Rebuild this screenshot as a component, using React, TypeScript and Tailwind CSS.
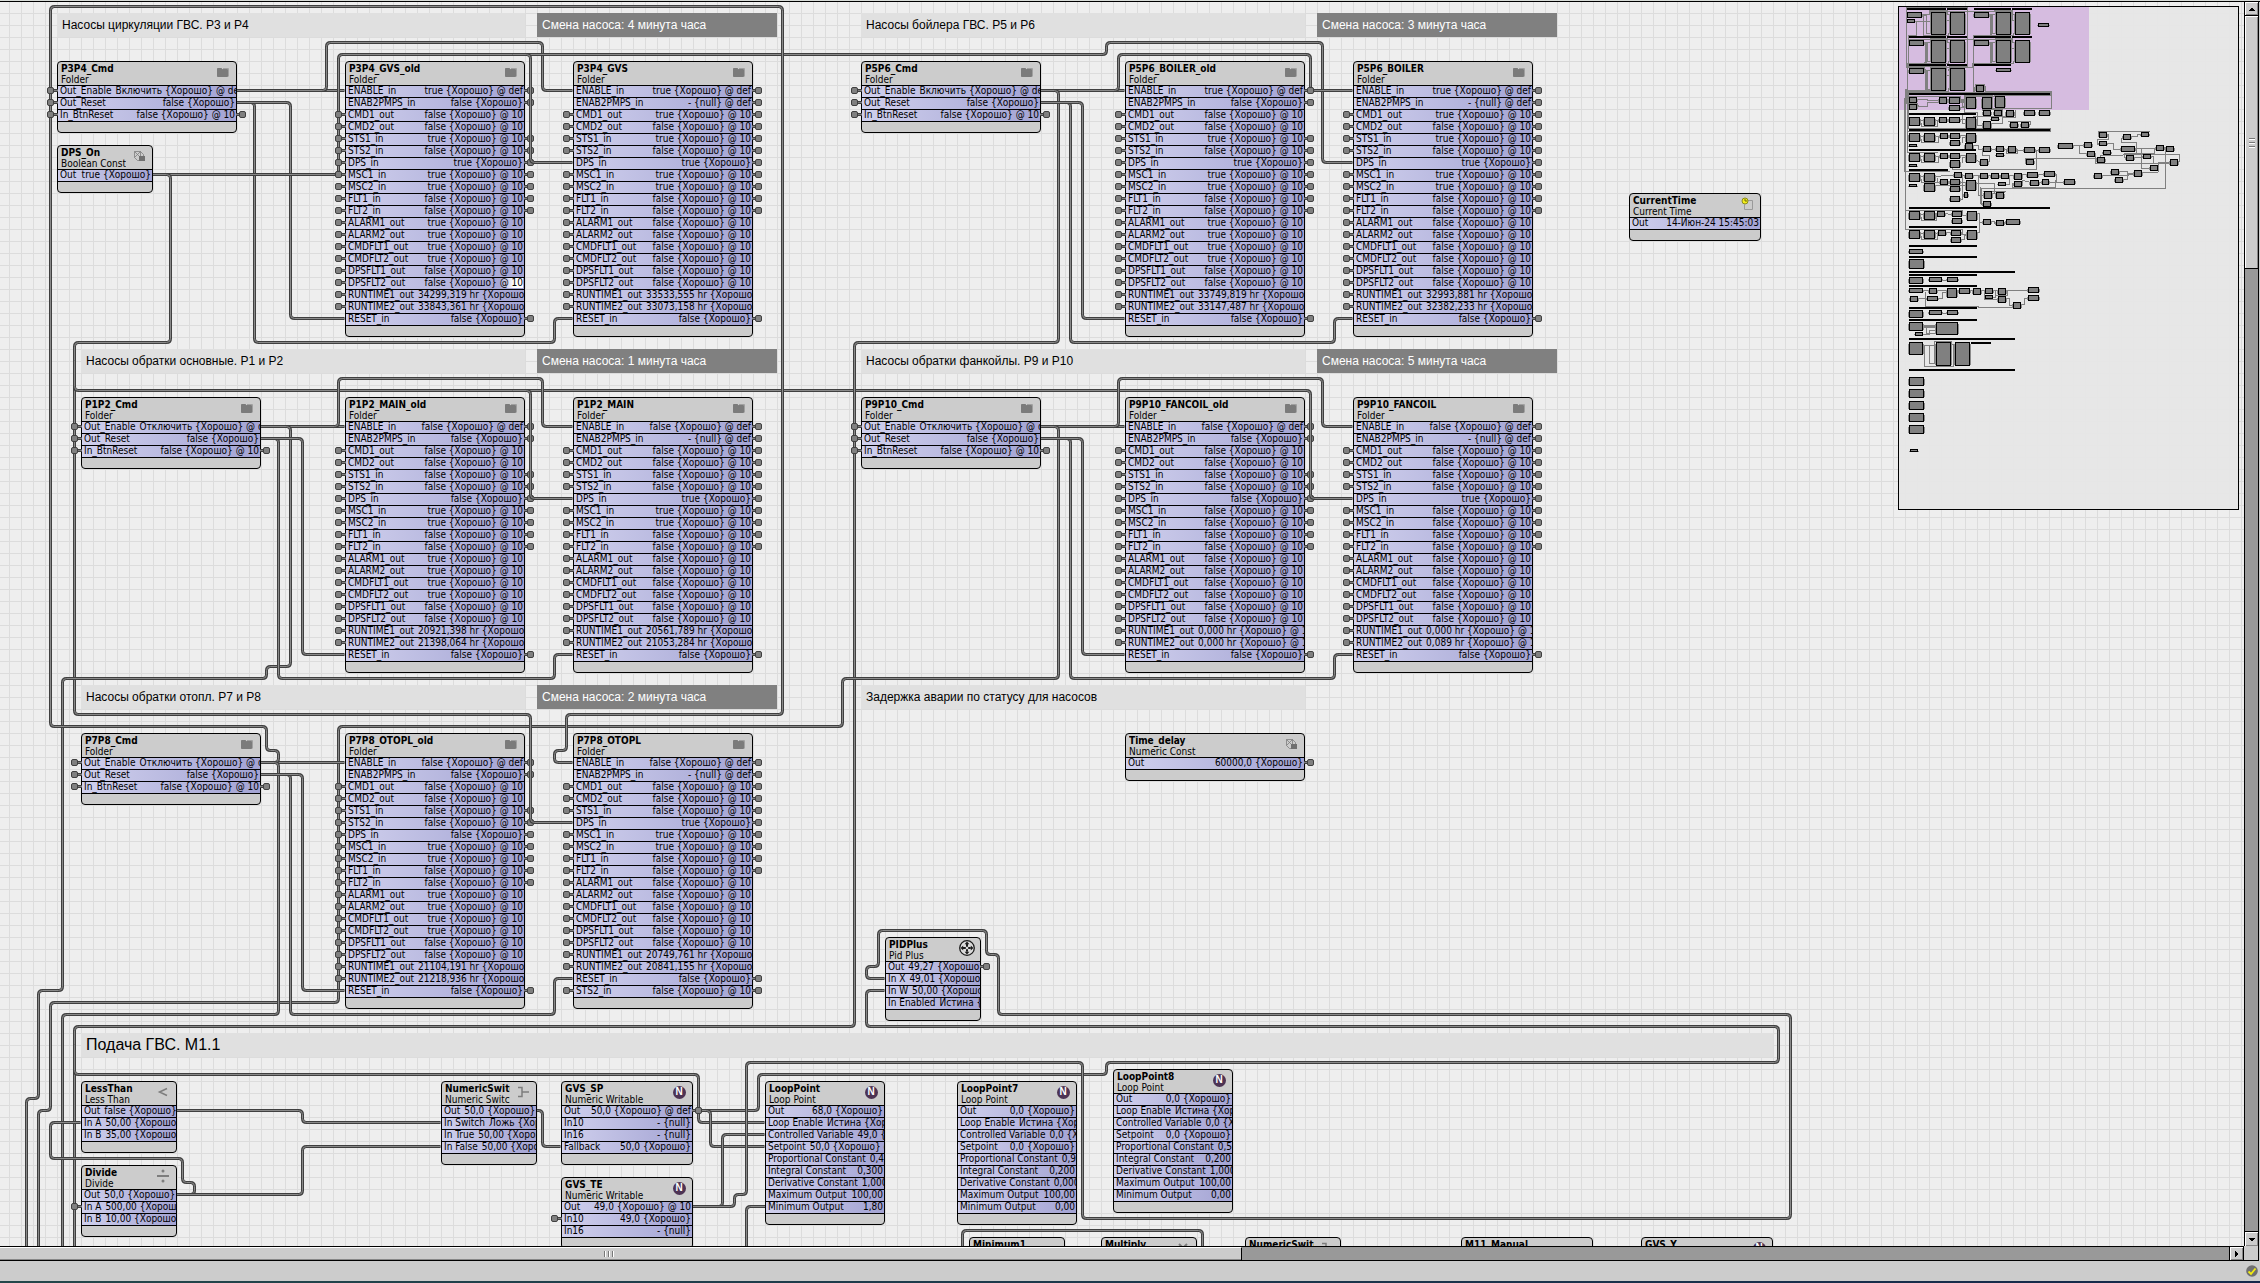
import React from "react";

const CELL = 12;
const ORIGIN_X = 9;
const ORIGIN_Y = -1;

type IconName =
  | "folder"
  | "const"
  | "clock"
  | "less"
  | "divide"
  | "switch"
  | "numeric"
  | "pid"
  | "minimum"
  | "multiply"
  | "manual";

/** label, value, flags: "l" = left pin, "r" = right pin, "h" = highlighted value */
type Row = [string, string, string?];

interface NodeData {
  x: number;
  y: number;
  w: number;
  name: string;
  type: string;
  icon: IconName;
  rows: Row[];
}

interface NoteData {
  x: number;
  y: number;
  w: number;
  text: string;
  tone?: "light" | "dark" | "large";
}

const T10 = "true {Хорошо} @ 10";
const F10 = "false {Хорошо} @ 10";
const T = "true {Хорошо}";
const F = "false {Хорошо}";
const TDEF = "true {Хорошо} @ def";
const FDEF = "false {Хорошо} @ def";
const NDEF = "- {null} @ def";
const NULL = "- {null}";

const PUMP_LABELS = [
  "ENABLE_in",
  "ENAB2PMPS_in",
  "CMD1_out",
  "CMD2_out",
  "STS1_in",
  "STS2_in",
  "DPS_in",
  "MSC1_in",
  "MSC2_in",
  "FLT1_in",
  "FLT2_in",
  "ALARM1_out",
  "ALARM2_out",
  "CMDFLT1_out",
  "CMDFLT2_out",
  "DPSFLT1_out",
  "DPSFLT2_out",
  "RUNTIME1_out",
  "RUNTIME2_out",
  "RESET_in",
];

const OLD_PINS = ["r", "r", "l", "l", "lr", "lr", "lr", "lr", "lr", "lr", "lr", "l", "l", "l", "l", "l", "l", "l", "l", "r"];
const NEW_PINS = ["r", "r", "lr", "lr", "lr", "lr", "r", "lr", "lr", "lr", "lr", "l", "l", "l", "l", "l", "l", "l", "l", "r"];

const pumpRows = (values: string[], pins: string[]): Row[] =>
  PUMP_LABELS.map((label, i): Row => [label, values[i], pins[i]]);

const cmd = (x: number, y: number, name: string, enable: string): NodeData => ({
  x,
  y,
  w: 15,
  name,
  type: "Folder",
  icon: "folder",
  rows: [
    ["Out_Enable", enable, "l"],
    ["Out_Reset", F, "l"],
    ["In_BtnReset", F10, "lr"],
  ],
});

const pump = (x: number, y: number, name: string, rows: Row[]): NodeData => ({
  x,
  y,
  w: 15,
  name,
  type: "Folder",
  icon: "folder",
  rows,
});

const loopRows = (
  out: string,
  variable: string,
  setpoint: string,
  p: string,
  i: string,
  d: string,
  max: string,
  min: string,
): Row[] => [
  ["Out", out],
  ["Loop Enable", "Истина {Хорошо}"],
  ["Controlled Variable", variable],
  ["Setpoint", setpoint],
  ["Proportional Constant", p],
  ["Integral Constant", i],
  ["Derivative Constant", d],
  ["Maximum Output", max],
  ["Minimum Output", min],
];

const gvsOld = pumpRows(
  [TDEF, F, F10, F10, T10, F10, T, T10, T10, F10, F10, T10, T10, T10, T10, F10, F10, "34299,319 hr {Хорошо}", "33843,361 hr {Хорошо}", F],
  OLD_PINS,
);
gvsOld[16] = ["DPSFLT2_out", F10, "lh"];

const NODES: NodeData[] = [
  cmd(4, 5, "P3P4_Cmd", "Включить {Хорошо} @ def"),
  { x: 4, y: 12, w: 8, name: "DPS_On", type: "Boolean Const", icon: "const", rows: [["Out", T]] },
  pump(28, 5, "P3P4_GVS_old", gvsOld),
  pump(
    47,
    5,
    "P3P4_GVS",
    pumpRows(
      [TDEF, NDEF, T10, F10, T10, F10, T, T10, T10, F10, F10, F10, F10, F10, F10, F10, F10, "33533,555 hr {Хорошо}", "33073,158 hr {Хорошо}", F],
      NEW_PINS,
    ),
  ),
  cmd(71, 5, "P5P6_Cmd", "Включить {Хорошо} @ def"),
  pump(
    93,
    5,
    "P5P6_BOILER_old",
    pumpRows(
      [TDEF, F, F10, F10, T10, F10, T, T10, T10, F10, F10, T10, T10, T10, T10, F10, F10, "33749,819 hr {Хорошо}", "33147,487 hr {Хорошо}", F],
      OLD_PINS,
    ),
  ),
  pump(
    112,
    5,
    "P5P6_BOILER",
    pumpRows(
      [TDEF, NDEF, T10, F10, T10, F10, T, T10, T10, F10, F10, F10, F10, F10, F10, F10, F10, "32993,881 hr {Хорошо}", "32382,233 hr {Хорошо}", F],
      NEW_PINS,
    ),
  ),
  {
    x: 135,
    y: 16,
    w: 11,
    name: "CurrentTime",
    type: "Current Time",
    icon: "clock",
    rows: [["Out", "14-Июн-24 15:45:03"]],
  },
  cmd(6, 33, "P1P2_Cmd", "Отключить {Хорошо} @ def"),
  pump(
    28,
    33,
    "P1P2_MAIN_old",
    pumpRows(
      [FDEF, F, F10, F10, F10, F10, F, T10, T10, F10, F10, T10, T10, T10, T10, F10, F10, "20921,398 hr {Хорошо}", "21398,064 hr {Хорошо}", F],
      OLD_PINS,
    ),
  ),
  pump(
    47,
    33,
    "P1P2_MAIN",
    pumpRows(
      [FDEF, NDEF, F10, F10, F10, F10, T, T10, T10, F10, F10, F10, F10, F10, F10, F10, F10, "20561,789 hr {Хорошо}", "21053,284 hr {Хорошо}", F],
      NEW_PINS,
    ),
  ),
  cmd(71, 33, "P9P10_Cmd", "Отключить {Хорошо} @ def"),
  pump(
    93,
    33,
    "P9P10_FANCOIL_old",
    pumpRows(
      [FDEF, F, F10, F10, F10, F10, F, F10, F10, F10, F10, F10, F10, F10, F10, F10, F10, "0,000 hr {Хорошо} @ 10", "0,000 hr {Хорошо} @ 10", F],
      OLD_PINS,
    ),
  ),
  pump(
    112,
    33,
    "P9P10_FANCOIL",
    pumpRows(
      [FDEF, NDEF, F10, F10, F10, F10, T, F10, F10, F10, F10, F10, F10, F10, F10, F10, F10, "0,000 hr {Хорошо} @ 10", "0,089 hr {Хорошо} @ 10", F],
      NEW_PINS,
    ),
  ),
  cmd(6, 61, "P7P8_Cmd", "Отключить {Хорошо} @ def"),
  pump(
    28,
    61,
    "P7P8_OTOPL_old",
    pumpRows(
      [FDEF, F, F10, F10, F10, F10, F, T10, T10, F10, F10, T10, T10, T10, T10, F10, F10, "21104,191 hr {Хорошо}", "21218,936 hr {Хорошо}", F],
      OLD_PINS,
    ),
  ),
  pump(47, 61, "P7P8_OTOPL", [
    ["ENABLE_in", FDEF, "r"],
    ["ENAB2PMPS_in", NDEF, "r"],
    ["CMD1_out", F10, "lr"],
    ["CMD2_out", F10, "lr"],
    ["STS1_in", F10, "lr"],
    ["DPS_in", T, "r"],
    ["MSC1_in", T10, "lr"],
    ["MSC2_in", T10, "lr"],
    ["FLT1_in", F10, "lr"],
    ["FLT2_in", F10, "lr"],
    ["ALARM1_out", F10, "l"],
    ["ALARM2_out", F10, "l"],
    ["CMDFLT1_out", F10, "l"],
    ["CMDFLT2_out", F10, "l"],
    ["DPSFLT1_out", F10, "l"],
    ["DPSFLT2_out", F10, "l"],
    ["RUNTIME1_out", "20749,761 hr {Хорошо}", "l"],
    ["RUNTIME2_out", "20841,155 hr {Хорошо}", "l"],
    ["RESET_in", F, "r"],
    ["STS2_in", F10, "lr"],
  ]),
  {
    x: 93,
    y: 61,
    w: 15,
    name: "Time_delay",
    type: "Numeric Const",
    icon: "const",
    rows: [["Out", "60000,0 {Хорошо}", "r"]],
  },
  {
    x: 73,
    y: 78,
    w: 8,
    name: "PIDPlus",
    type: "Pid Plus",
    icon: "pid",
    rows: [
      ["Out", "49,27 {Хорошо}", "r"],
      ["In X", "49,01 {Хорошо}"],
      ["In W", "50,00 {Хорошо}"],
      ["In Enabled", "Истина {Хорошо}"],
    ],
  },
  {
    x: 6,
    y: 90,
    w: 8,
    name: "LessThan",
    type: "Less Than",
    icon: "less",
    rows: [
      ["Out", F],
      ["In A", "50,00 {Хорошо}"],
      ["In B", "35,00 {Хорошо}"],
    ],
  },
  {
    x: 6,
    y: 97,
    w: 8,
    name: "Divide",
    type: "Divide",
    icon: "divide",
    rows: [
      ["Out", "50,0 {Хорошо}"],
      ["In A", "500,00 {Хорошо}", "l"],
      ["In B", "10,00 {Хорошо}"],
    ],
  },
  {
    x: 36,
    y: 90,
    w: 8,
    name: "NumericSwitch",
    type: "Numeric Switch",
    icon: "switch",
    rows: [
      ["Out", "50,0 {Хорошо}"],
      ["In Switch", "Ложь {Хорошо}"],
      ["In True", "50,00 {Хорошо}"],
      ["In False", "50,00 {Хорошо}"],
    ],
  },
  {
    x: 46,
    y: 90,
    w: 11,
    name: "GVS_SP",
    type: "Numeric Writable",
    icon: "numeric",
    rows: [
      ["Out", "50,0 {Хорошо} @ def", "r"],
      ["In10", NULL],
      ["In16", NULL],
      ["Fallback", "50,0 {Хорошо}"],
    ],
  },
  {
    x: 46,
    y: 98,
    w: 11,
    name: "GVS_TE",
    type: "Numeric Writable",
    icon: "numeric",
    rows: [
      ["Out", "49,0 {Хорошо} @ 10"],
      ["In10", "49,0 {Хорошо}", "l"],
      ["In16", NULL],
    ],
  },
  {
    x: 63,
    y: 90,
    w: 10,
    name: "LoopPoint",
    type: "Loop Point",
    icon: "numeric",
    rows: loopRows("68,0 {Хорошо}", "49,0 {Хорошо}", "50,0 {Хорошо} @ def", "0,400", "0,300", "1,000", "100,00", "1,80"),
  },
  {
    x: 79,
    y: 90,
    w: 10,
    name: "LoopPoint7",
    type: "Loop Point",
    icon: "numeric",
    rows: loopRows("0,0 {Хорошо}", "0,0 {Хорошо}", "0,0 {Хорошо}", "0,900", "0,200", "0,000", "100,00", "0,00"),
  },
  {
    x: 92,
    y: 89,
    w: 10,
    name: "LoopPoint8",
    type: "Loop Point",
    icon: "numeric",
    rows: loopRows("0,0 {Хорошо}", "0,0 {Хорошо}", "0,0 {Хорошо}", "0,500", "0,200", "1,000", "100,00", "0,00"),
  },
  { x: 80, y: 103, w: 8, name: "Minimum1", type: "Minimum", icon: "minimum", rows: [["Out", "68,0 {Хорошо}"]] },
  { x: 91, y: 103, w: 8, name: "Multiply", type: "Multiply", icon: "multiply", rows: [["Out", "68,0 {Хорошо}"]] },
  { x: 103, y: 103, w: 8, name: "NumericSwitch1", type: "Numeric Switch", icon: "switch", rows: [["Out", "68,0 {Хорошо}"]] },
  { x: 121, y: 103, w: 11, name: "M11_Manual", type: "Numeric Writable", icon: "manual", rows: [["Out", "68,0 {Хорошо}"]] },
  { x: 136, y: 103, w: 11, name: "GVS_Y", type: "Numeric Writable", icon: "numeric", rows: [["Out", "68,0 {Хорошо}"]] },
];

const NOTES: NoteData[] = [
  { x: 4, y: 1, w: 39, text: "Насосы циркуляции ГВС. P3 и P4" },
  { x: 44, y: 1, w: 20, text: "Смена насоса: 4 минута часа", tone: "dark" },
  { x: 71, y: 1, w: 37, text: "Насосы бойлера ГВС. P5 и P6" },
  { x: 109, y: 1, w: 20, text: "Смена насоса: 3 минута часа", tone: "dark" },
  { x: 6, y: 29, w: 37, text: "Насосы обратки основные. P1 и P2" },
  { x: 44, y: 29, w: 20, text: "Смена насоса: 1 минута часа", tone: "dark" },
  { x: 71, y: 29, w: 37, text: "Насосы обратки фанкойлы. P9 и P10" },
  { x: 109, y: 29, w: 20, text: "Смена насоса: 5 минута часа", tone: "dark" },
  { x: 6, y: 57, w: 37, text: "Насосы обратки отопл. P7 и P8" },
  { x: 44, y: 57, w: 20, text: "Смена насоса: 2 минута часа", tone: "dark" },
  { x: 71, y: 57, w: 37, text: "Задержка аварии по статусу для насосов" },
  { x: 6, y: 86, w: 141, text: "Подача ГВС. M1.1", tone: "large" },
];

/** Each wire is a list of x, y cell pairs, joined with rounded corners. */
const WIRES: number[][] = [
  [19, 7, 28, 7],
  [19, 7, 26, 7, 26, 3, 44, 3, 44, 7, 47, 7],
  [19, 8, 20, 8, 20, 28, 45, 28, 45, 26, 47, 26],
  [19, 8, 23, 8, 23, 26, 28, 26],
  [12, 14, 27, 14, 27, 4, 91, 4, 91, 3, 109, 3, 109, 13, 112, 13],
  [12, 14, 13, 14, 13, 28, 5, 28, 5, 59, 43, 59],
  [5, 30, 5, 32, 108, 32],
  [21, 35, 28, 35],
  [21, 35, 27, 35, 27, 31, 44, 31, 44, 35, 47, 35],
  [21, 35, 23, 35, 23, 55, 21, 55, 21, 56, 4, 56, 4, 82, 2, 82, 2, 91, 1, 91, 1, 106],
  [21, 36, 22, 36, 22, 56, 45, 56, 45, 54, 47, 54],
  [21, 36, 24, 36, 24, 54, 28, 54],
  [86, 7, 93, 7],
  [86, 7, 92, 7, 92, 4, 108, 4, 108, 7, 112, 7],
  [86, 7, 87, 7, 87, 28, 70, 28, 70, 85, 5, 85, 5, 106],
  [86, 8, 88, 8, 88, 28, 110, 28, 110, 26, 112, 26],
  [86, 8, 89, 8, 89, 26, 93, 26],
  [86, 35, 93, 35],
  [86, 35, 92, 35, 92, 31, 109, 31, 109, 35, 112, 35],
  [86, 35, 87, 35, 87, 56, 69, 56, 69, 60, 27, 60, 27, 83, 3, 83, 3, 92, 2, 92, 2, 106],
  [86, 36, 88, 36, 88, 56, 110, 56, 110, 54, 112, 54],
  [86, 36, 89, 36, 89, 54, 93, 54],
  [21, 63, 28, 63],
  [21, 63, 22, 63, 22, 62, 21, 62, 21, 60, 3, 60, 3, 0, 64, 0, 64, 59, 46, 59, 46, 62, 45, 62, 45, 63, 47, 63],
  [21, 63, 22, 63, 22, 84, 4, 84, 4, 106],
  [21, 64, 23, 64, 23, 84, 45, 84, 45, 81, 47, 81],
  [21, 64, 24, 64, 24, 82, 28, 82],
  [14, 92, 24, 92, 24, 93, 36, 93],
  [14, 99, 15, 99, 15, 98, 14, 98, 14, 96, 3, 96, 3, 93, 6, 93],
  [14, 99, 24, 99, 24, 95, 36, 95],
  [43, 92, 44, 92, 44, 95, 46, 95],
  [5, 87, 5, 89, 57, 89, 57, 93, 63, 93],
  [57, 92, 62, 92, 62, 89, 91, 89, 91, 88, 147, 88, 147, 85, 71, 85, 71, 82, 73, 82],
  [57, 92, 58, 92, 58, 95, 63, 95],
  [57, 100, 59, 100, 59, 94, 63, 94],
  [
    57, 100, 60, 100, 60, 99, 61, 99, 61, 88, 89, 88, 89, 101, 148, 101, 148, 84, 82, 84, 82, 79, 81, 79, 81, 77, 72,
    77, 72, 80, 71, 80, 71, 81, 73, 81,
  ],
  [63, 100, 61, 100, 61, 106],
  [79, 106, 79, 102, 99, 102, 99, 106],
];

/** Wires that run across the pins on the right edge of a block. */
const TOP_WIRES: number[][] = [
  [42, 4, 43, 4, 43, 13, 47, 13],
  [42, 32, 43, 32, 43, 41, 47, 41],
  [107, 32, 108, 32, 108, 41, 112, 41],
  [42, 59, 43, 59, 43, 68, 47, 68],
];

function wirePath(cells: number[]): string {
  const pts: [number, number][] = [];
  for (let i = 0; i < cells.length; i += 2) {
    pts.push([ORIGIN_X + cells[i] * CELL + 5.5, ORIGIN_Y + cells[i + 1] * CELL + 5.5]);
  }
  const r = 4;
  const half = CELL / 2;
  const sx = pts[0][0] - Math.sign(pts[1][0] - pts[0][0]) * half;
  const sy = pts[0][1] - Math.sign(pts[1][1] - pts[0][1]) * half;
  let d = `M${sx} ${sy}`;
  for (let i = 1; i < pts.length - 1; i++) {
    const [px, py] = pts[i - 1];
    const [x, y] = pts[i];
    const [nx, ny] = pts[i + 1];
    const ax = x - Math.sign(x - px) * r;
    const ay = y - Math.sign(y - py) * r;
    const bx = x + Math.sign(nx - x) * r;
    const by = y + Math.sign(ny - y) * r;
    d += `L${ax} ${ay}Q${x} ${y} ${bx} ${by}`;
  }
  const last = pts[pts.length - 1];
  const prev = pts[pts.length - 2];
  const ex = last[0] - Math.sign(last[0] - prev[0]) * half;
  const ey = last[1] - Math.sign(last[1] - prev[1]) * half;
  return `${d}L${ex} ${ey}`;
}

function Wires({ wires }: { wires: number[][] }) {
  return (
    <svg className="pointer-events-none absolute inset-0 size-full" fill="none" aria-hidden="true">
      {wires.map((w, i) => {
        const d = wirePath(w);
        return (
          <g key={i}>
            <path d={d} stroke="#404040" strokeWidth="3" />
            <path d={d} stroke="#8a8a8a" strokeWidth="1" />
          </g>
        );
      })}
    </svg>
  );
}

function Icon({ name }: { name: IconName }) {
  if (name === "numeric") {
    return (
      <span className="flex size-[13px] items-center justify-center rounded-full bg-[#4d3354] font-['Liberation_Sans',sans-serif] text-[10px] leading-none font-bold text-white">
        N
      </span>
    );
  }
  return (
    <svg viewBox="0 0 16 16" className="size-4" fill="none" stroke="#7d7d7d" strokeWidth="1" aria-hidden="true">
      {name === "folder" && (
        <>
          <path d="M2.5 4.5h4l1 1h5v7h-10z" fill="#7b7b7b" stroke="#7b7b7b" />
          <path d="M8 4.500h5.5v8" stroke="#a0a0a0" />
        </>
      )}
      {name === "const" && (
        <>
          <path d="M3.5 3.5h6l3 3v6h-6l-3-3zM3.500 3.500l6 6M9.500 3.500v6M3.5 9.5l6-6" strokeWidth="0.8" />
          <rect x="8" y="8" width="6" height="5" fill="#707070" stroke="none" />
        </>
      )}
      {name === "clock" && (
        <>
          <path d="M9 4.5h4.5v9h-8v-5" stroke="#9a9a9a" />
          <circle cx="6" cy="5" r="3" fill="#f4ee1a" stroke="#8a8a20" />
          <path d="M6 3v2h2" stroke="#6a6a10" />
        </>
      )}
      {name === "less" && <path d="M12 4.5L4.5 8L12 11.5" strokeWidth="1.5" />}
      {name === "divide" && (
        <>
          <path d="M2 8h12" strokeWidth="2" />
          <circle cx="8" cy="3" r="1.5" fill="#7d7d7d" stroke="none" />
          <circle cx="8" cy="13" r="1.5" fill="#7d7d7d" stroke="none" />
        </>
      )}
      {name === "switch" && <path d="M3 3.5h4v9H3M7 8h7" strokeWidth="1.5" />}
      {name === "minimum" && <path d="M2 7h4M9 7h4M4 7v5M11 7v5" strokeWidth="2" />}
      {name === "multiply" && <path d="M4 4l8 8M12 4l-8 8" strokeWidth="2" />}
      {name === "manual" && <path d="M6 8h4v4H6z" fill="#7d7d7d" />}
      {name === "pid" && (
        <>
          <circle cx="8" cy="8" r="7.3" fill="#dcdcdc" stroke="#1c1c1c" strokeWidth="1.3" />
          <path
            d="M8 1.6l2.4 2.6H5.6zM8 14.4l2.4-2.6H5.6zM1.6 8l2.6-2.4v4.8zM14.4 8l-2.6-2.4v4.8zM7 4h2v2.800H7zM7 9.200h2V12H7zM4 7h2.800v2H4zM9.200 7H12v2H9.200z"
            fill="#1c1c1c"
            stroke="none"
          />
        </>
      )}
    </svg>
  );
}

function Pin({ side }: { side: "l" | "r" }) {
  return (
    <span
      className={
        side === "l"
          ? "absolute top-px -left-[11px] flex w-[11px] items-center"
          : "absolute top-px -right-[10px] flex w-[10px] flex-row-reverse items-center"
      }
    >
      <span className="size-[7px] shrink-0 rounded-[2px] border border-[#404040] bg-[#808080]" />
      <span className="h-[3px] flex-1 border-y border-[#404040] bg-[#808080]" />
    </span>
  );
}

function Block({ node }: { node: NodeData }) {
  return (
    <article
      className="absolute rounded-[4px] border border-black bg-[#cccccc] text-[10px] text-black"
      style={{
        left: ORIGIN_X + node.x * CELL,
        top: ORIGIN_Y + node.y * CELL,
        width: node.w * CELL,
      }}
    >
      <header className="flex h-[23px] items-start justify-between pr-[5px] pl-[3px]">
        <div className="min-w-0 flex-1 overflow-hidden whitespace-nowrap">
          <h2 className="leading-[13px] font-bold">{node.name}</h2>
          <p className="leading-[10px]">{node.type}</p>
        </div>
        <span className="mt-[2px] ml-[5px] flex size-4 shrink-0 items-center justify-center">
          <Icon name={node.icon} />
        </span>
      </header>
      <dl>
        {node.rows.map(([label, value, flags = ""]) => (
          <div key={label} className="relative border-t border-black">
            <div className="flex h-[11px] justify-between gap-1 overflow-hidden bg-linear-to-r from-[#d0d0ed] to-[#a3a3d3] pr-px pl-[2px] leading-[9px] whitespace-nowrap">
              <dt className="shrink-0">{label}</dt>
              <dd className="shrink-0">
                {flags.includes("h") ? (
                  <>
                    {value.slice(0, -4)}
                    <span className="bg-linear-to-r from-transparent to-white to-60%">@ 10</span>
                  </>
                ) : (
                  value
                )}
              </dd>
            </div>
            {flags.includes("l") && <Pin side="l" />}
            {flags.includes("r") && <Pin side="r" />}
          </div>
        ))}
      </dl>
      <footer className="h-[11px] border-t border-black" />
    </article>
  );
}

const NOTE_TONES = {
  light: "bg-[#e0e0e0] text-xs text-black",
  dark: "bg-[#808080] text-xs text-white",
  large: "bg-[#e0e0e0] text-base text-black",
};

function Note({ note }: { note: NoteData }) {
  return (
    <p
      className={`absolute flex h-6 items-center overflow-hidden pl-[5px] font-['Liberation_Sans',Arial,sans-serif] whitespace-nowrap ${NOTE_TONES[note.tone ?? "light"]}`}
      style={{
        left: ORIGIN_X + note.x * CELL,
        top: ORIGIN_Y + note.y * CELL,
        width: note.w * CELL,
      }}
    >
      {note.text}
    </p>
  );
}

/* Overview geometry, in thirds of a pixel. */
const MAP_BOXES: number[][] = [
  [342, 330, 24, 18], [378, 330, 24, 21], [432, 330, 33, 18], [477, 330, 33, 18], [309, 330, 24, 18],
  [333, 351, 24, 12], [309, 363, 24, 24], [390, 366, 24, 18], [423, 366, 24, 18],
  [87, 351, 33, 27], [132, 351, 33, 27], [177, 351, 24, 18], [207, 351, 33, 18], [258, 351, 30, 36],
  [87, 399, 33, 27], [132, 399, 33, 27], [180, 399, 24, 18], [210, 399, 30, 18], [258, 399, 30, 30],
  [210, 420, 30, 18], [255, 429, 24, 21], [87, 432, 24, 9],
  [309, 438, 24, 18], [348, 438, 24, 18], [384, 438, 24, 21], [432, 441, 33, 18], [477, 441, 33, 18],
  [348, 459, 24, 12], [300, 477, 24, 21], [438, 477, 24, 18], [534, 429, 45, 18], [612, 426, 24, 18],
  [87, 459, 33, 27], [132, 459, 33, 27], [180, 459, 24, 18], [210, 459, 30, 18], [258, 459, 30, 30],
  [210, 480, 30, 24], [87, 492, 24, 9],
  [657, 396, 24, 18], [729, 402, 24, 18], [783, 396, 24, 15], [657, 423, 24, 15], [723, 438, 42, 18],
  [828, 435, 24, 18], [858, 438, 24, 18], [669, 450, 24, 15], [621, 453, 24, 18], [651, 471, 24, 18],
  [738, 465, 24, 18], [789, 462, 24, 15], [870, 477, 24, 21], [810, 495, 24, 18], [642, 519, 24, 18],
  [693, 507, 24, 18], [762, 510, 24, 21], [705, 531, 24, 18],
  [87, 519, 33, 27], [132, 519, 33, 27], [132, 549, 33, 27], [87, 552, 24, 9], [222, 516, 24, 18],
  [255, 519, 24, 18], [180, 537, 24, 18], [210, 537, 30, 18], [210, 558, 30, 18], [258, 540, 30, 33],
  [210, 588, 30, 18], [252, 576, 12, 18], [300, 519, 24, 18], [333, 519, 24, 18], [363, 519, 24, 18],
  [402, 519, 24, 21], [441, 516, 33, 18], [492, 513, 33, 18], [354, 546, 24, 12], [402, 543, 24, 18],
  [450, 540, 27, 18], [486, 537, 21, 18], [552, 537, 33, 18], [312, 573, 24, 24], [348, 576, 24, 21],
  [309, 603, 24, 18],
  [87, 633, 33, 27], [132, 633, 33, 27], [171, 633, 24, 18], [216, 633, 30, 18], [216, 654, 30, 18],
  [261, 633, 30, 30], [309, 657, 24, 18], [348, 660, 24, 18], [378, 657, 42, 18],
  [87, 690, 33, 27], [132, 690, 33, 27], [174, 690, 24, 18], [213, 690, 30, 18], [213, 711, 30, 18],
  [261, 690, 30, 30], [87, 747, 42, 15], [87, 777, 45, 30],
  [87, 831, 42, 21], [147, 831, 39, 15], [201, 831, 33, 15],
  [87, 864, 42, 15], [147, 864, 24, 18], [201, 864, 30, 30], [237, 864, 33, 18], [279, 864, 24, 21],
  [315, 864, 24, 18], [354, 864, 24, 21], [444, 861, 33, 18], [90, 888, 24, 18], [141, 888, 33, 15],
  [315, 885, 24, 12], [354, 888, 24, 21], [444, 885, 33, 18], [399, 906, 24, 21],
  [87, 930, 42, 24], [147, 930, 39, 15], [201, 930, 33, 15],
  [87, 966, 42, 27], [168, 966, 66, 39], [105, 996, 24, 12],
  [87, 1026, 42, 39], [168, 1026, 45, 72], [225, 1026, 45, 72],
  [87, 1131, 45, 27], [87, 1167, 45, 27], [87, 1203, 45, 27], [87, 1239, 45, 27], [87, 1275, 45, 27],
  [90, 1347, 24, 9],
];

const MAP_BARS: number[][] = [
  [87, 339, 201], [87, 387, 423], [87, 447, 201], [87, 507, 117], [87, 621, 423], [87, 678, 204],
  [87, 735, 204], [87, 768, 204], [87, 813, 318], [87, 822, 204], [87, 855, 204], [87, 921, 204],
  [87, 957, 204], [87, 1014, 318], [273, 1026, 60], [87, 1107, 318],
];

const MAP_LINES: string[] = [
  "73,294 73,514 210,514", "76,268 76,688 247,688 247,703 261,703", "76,631 247,631 247,646 261,646",
  "82,330 82,457 174,457", "85,330 85,384 511,384 511,394 85,394", "253,330 253,337 292,337 292,376 309,376",
  "280,349 391,349 391,334", "367,334 367,370 334,370", "385,364 451,364 451,376", "406,330 406,352 370,352",
  "120,361 132,361", "165,361 177,361", "123,370 123,379 172,379 172,364 177,364", "240,358 258,358", "247,346 247,370 258,370",
  "120,409 132,409", "165,409 180,409", "123,418 123,427 175,427 175,412 180,412", "240,406 258,406", "247,430 247,412 258,412",
  "279,436 295,436 295,448 309,448", "334,448 348,448", "372,448 384,448", "408,451 432,451", "465,451 477,451",
  "307,451 307,466 328,466 328,487", "379,448 379,460 412,460 412,448",
  "120,469 132,469", "165,469 180,469", "123,478 123,487 175,487 175,472 180,472", "240,466 258,466", "247,490 247,472 258,472",
  "288,478 300,487", "579,436 612,436", "598,436 598,460 621,460", "436,490 436,475 660,475 660,466 870,463 898,463 898,487",
  "646,460 646,490 870,490", "655,412 655,394 811,394", "681,403 685,403 685,418 652,418 652,433 657,433",
  "681,430 700,430 700,448 723,448", "724,414 724,427 769,427 769,460 733,460 733,472 738,472", "753,409 772,409 772,403 783,403",
  "765,445 828,445", "785,445 785,505 810,505", "822,445 822,460 733,460", "852,442 856,442 856,565 303,565 303,612 309,612",
  "834,517 834,487 870,487", "786,517 834,517", "717,514 741,514 741,520 762,520", "666,526 744,526 744,520", "729,538 741,538 741,523 762,523",
  "762,472 789,472", "813,469 820,469 820,490", "469,451 469,508 217,508 217,487",
  "120,529 132,529", "165,529 222,526", "246,526 255,526", "279,526 300,526", "324,526 333,526", "357,526 363,526", "387,526 402,526",
  "426,523 441,523", "474,523 492,523", "525,523 529,523 529,547 552,547", "388,529 388,553 378,553", "427,553 427,541 450,547",
  "477,547 486,547", "507,547 552,547", "397,550 397,562 526,562 526,541", "123,538 123,547 172,547 172,535",
  "165,547 180,547", "204,547 210,547", "240,547 258,547", "165,556 258,556", "247,529 247,586 252,586", "240,598 247,598 247,580",
  "288,550 343,550 343,580 348,580", "296,526 296,586 312,586", "300,562 300,610 309,610", "336,580 348,580", "372,580 376,574 310,574",
  "120,643 132,643", "165,643 171,643", "195,640 210,643 216,643", "123,652 123,661 168,661 168,646", "291,640 298,640 298,697 291,697",
  "298,667 309,667", "333,664 342,664 342,670 348,670", "372,667 378,667", "420,664 423,664",
  "120,700 132,700", "165,700 174,700", "198,697 213,697", "123,709 123,718 171,718 171,703", "243,718 254,718 254,706 261,706",
  "186,841 201,841", "129,871 147,871", "171,871 201,871", "231,871 237,871", "270,871 279,871", "303,871 315,871", "339,871 354,871",
  "378,871 444,871", "114,895 141,895", "174,895 187,895 187,877 201,877", "136,877 136,919 294,919 294,922 399,922",
  "313,874 313,898 354,898", "346,874 346,892 339,892", "382,874 382,886 349,886", "378,895 388,895 388,916 399,916",
  "423,913 433,913 433,895 444,895", "186,940 201,940", "129,976 168,976", "129,979 168,979", "129,982 168,982", "139,976 139,1000 168,1000",
  "129,1003 148,1003 148,991 168,991", "129,1036 168,1036", "133,1039 133,1099 221,1099 221,1036 225,1036", "148,1036 148,1090 168,1090",
  "163,1090 163,1024 214,1024 214,1033 225,1033",
];

function Overview() {
  const boxes = [
    ...NODES.filter((n) => n.y < 103 && n.name !== "GVS_TE").map((n) => [69 + n.x * 3, 21 + n.y * 3, n.w * 3, (n.rows.length + 3) * 3]),
    [207, 315, 33, 18],
    ...MAP_BOXES,
  ];
  const bars = [...NOTES.map((n) => [69 + n.x * 3, 21 + n.y * 3, n.w * 3]), ...MAP_BARS];
  return (
    <figure className="absolute top-1 right-[5px] border border-black bg-[#e6e6e6]/95" aria-label="Обзор схемы">
      <svg viewBox="57 21 1017 1506" className="h-[502px] w-[339px]" fill="none" shapeRendering="crispEdges">
        <rect x="57" y="21" width="570" height="309" fill="#d6bce0" />
        <g stroke="#808080" strokeWidth="3">
          {[...WIRES, ...TOP_WIRES].map((w, i) => {
            const pts: string[] = [];
            for (let k = 0; k < w.length; k += 2) {
              pts.push(`${70.5 + w[k] * 3},${22.5 + Math.min(w[k + 1], 103) * 3}`);
            }
            return <polyline key={i} points={pts.join(" ")} />;
          })}
          {MAP_LINES.map((points, i) => (
            <polyline key={i} points={points} />
          ))}
        </g>
        {boxes.map(([x, y, w, h], i) => (
          <g key={i}>
            <rect x={x - 3} y={y + 6} width={w + 6} height={Math.max(h - 9, 3)} fill="#8c8c8c" />
            <rect x={x} y={y} width={w} height={h} fill="#000" />
            <rect x={x + 3} y={y + 3} width={w - 6} height={h - 6} fill="#808080" />
          </g>
        ))}
        {bars.map(([x, y, w], i) => (
          <rect key={i} x={x} y={y} width={w} height="6" fill="#000" />
        ))}
      </svg>
    </figure>
  );
}

function ArrowButton({ label, d, className }: { label: string; d: string; className: string }) {
  return (
    <button
      type="button"
      aria-label={label}
      className={`flex shrink-0 items-center justify-center border-t border-l border-white bg-[#cccccc] shadow-[inset_-1px_-1px_0_#888] ${className}`}
    >
      <svg viewBox="0 0 8 8" className="size-2" fill="#000" shapeRendering="crispEdges" aria-hidden="true">
        <path d={d} />
      </svg>
    </button>
  );
}

export default function App() {
  return (
    <div className="flex h-screen flex-col overflow-hidden bg-[#cccccc] font-['DejaVu_Sans_Condensed','DejaVu_Sans',sans-serif]">
      <div className="h-[2px] shrink-0 border-b border-black bg-[#d8dcd8]" />
      <div className="flex min-h-0 flex-1">
        <main className="relative min-w-0 flex-1 overflow-hidden bg-[#eeeeee] bg-[linear-gradient(to_right,#dcdcdc_1px,transparent_1px),linear-gradient(to_bottom,#dcdcdc_1px,transparent_1px)] bg-[size:12px_12px] bg-[position:9px_11px]">
          {NOTES.map((n) => (
            <Note key={`${n.x}-${n.y}`} note={n} />
          ))}
          <Wires wires={WIRES} />
          {NODES.map((n) => (
            <Block key={n.name} node={n} />
          ))}
          <Wires wires={TOP_WIRES} />
          <Overview />
        </main>
        <div className="flex w-4 shrink-0 flex-col bg-[#cccccc] pr-px">
          <div className="flex min-h-0 flex-1 flex-col border-x border-black">
            <ArrowButton label="Вверх" d="M4 2L7 6H1z" className="h-[13px]" />
            <div className="flex min-h-0 flex-1 flex-col border-y border-black bg-[#999999]">
              <div className="flex basis-[253px] flex-col items-center justify-center gap-[3px] border-t border-b border-t-white border-b-black bg-[#cccccc] shadow-[inset_1px_0_0_#fff,inset_-1px_0_0_#888]">
                <i className="h-px w-[6px] bg-[#777] shadow-[0_1px_0_#fff]" />
                <i className="h-px w-[6px] bg-[#777] shadow-[0_1px_0_#fff]" />
                <i className="h-px w-[6px] bg-[#777] shadow-[0_1px_0_#fff]" />
              </div>
            </div>
            <ArrowButton label="Вниз" d="M1 2H7L4 6z" className="h-[14px]" />
          </div>
        </div>
      </div>
      <div className="flex h-[15px] shrink-0 pr-px">
        <div className="flex min-w-0 flex-1 border-y border-black bg-[#999999]">
          <div className="flex basis-[1242px] items-center justify-center gap-[3px] border-t border-r border-t-white border-r-black bg-[#cccccc] pr-6 shadow-[inset_0_-1px_0_#888]">
            <i className="h-[6px] w-px bg-[#777] shadow-[1px_0_0_#fff]" />
            <i className="h-[6px] w-px bg-[#777] shadow-[1px_0_0_#fff]" />
            <i className="h-[6px] w-px bg-[#777] shadow-[1px_0_0_#fff]" />
          </div>
          <span className="flex-1 border-r border-black" />
          <ArrowButton label="Вправо" d="M2 1L6 4L2 7z" className="w-[13px]" />
        </div>
        <div className="w-4 shrink-0 border-x border-b border-black bg-[#cccccc]" />
      </div>
      <footer className="flex h-5 shrink-0 items-center justify-end bg-[#cccccc] pr-[2px]">
        <svg viewBox="0 0 12 12" className="size-3" fill="none" role="img" aria-label="Готово">
          <circle cx="6" cy="6" r="5.8" fill="#707070" />
          <path d="M2.5 6.5L5 9L9.5 3.5" stroke="#f2ec10" strokeWidth="1.8" />
        </svg>
      </footer>
      <div className="h-[2px] shrink-0 bg-linear-to-r from-[#24474a] to-[#16284a]" />
    </div>
  );
}
